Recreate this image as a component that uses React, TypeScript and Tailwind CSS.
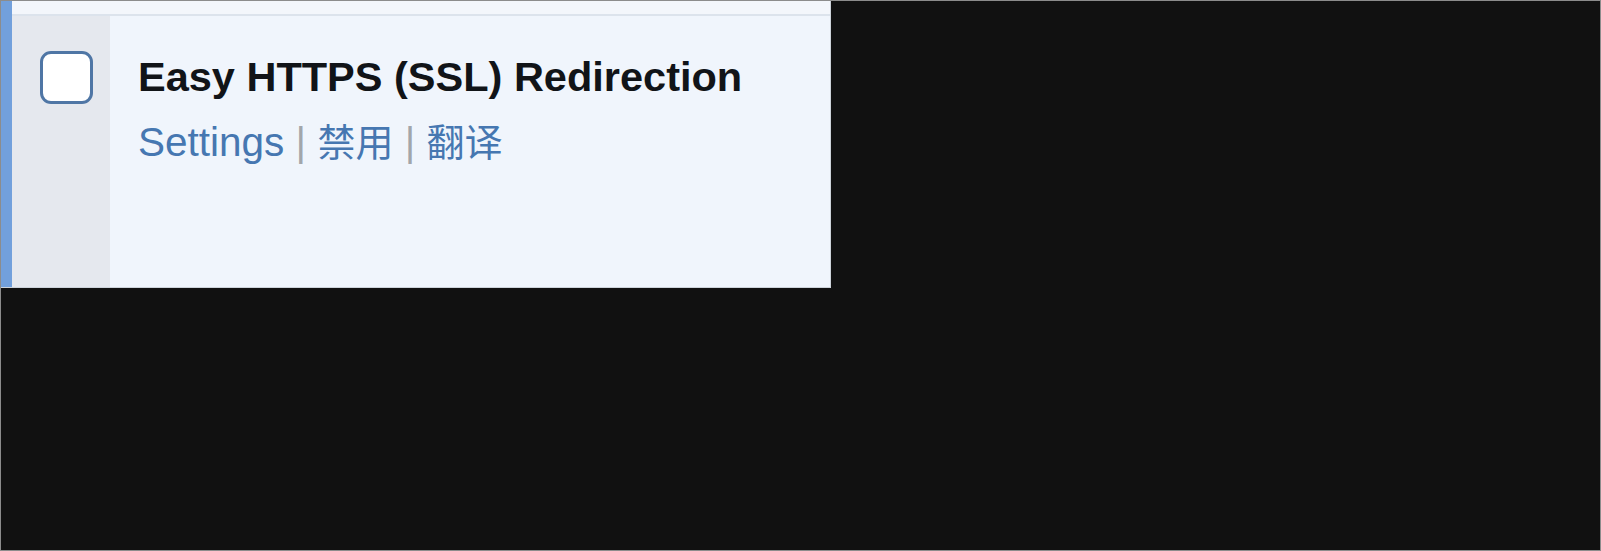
export default function App() {
    return (
        <div className="w-[1601px] h-[551px] bg-[#111111] border border-[#8c8c8c] font-['Liberation_Sans','Noto_Sans_CJK_SC',sans-serif]">
            <div className="w-[830px] flex bg-[#f0f5fc] border-r border-b border-[#cdd3da]">
                {/* active plugin marker */}
                <div className="w-[11px] bg-[#72a0dc]" />

                <div className="flex-1 flex flex-col">
                    <div className="h-[15px] bg-[#f3f6fb] border-b-2 border-[#dce3ec]" />

                    <div className="h-[271px] flex">
                        <div className="w-[98px] bg-[#e5e8ee] pl-[28px] pt-[35px]">
                            <div className="w-[53px] h-[53px] rounded-[11px] border-[3px] border-[#4f76a5] bg-white" />
                        </div>

                        <div className="flex-1 pl-[28px] pt-[37px]">
                            <div className="text-[41.5px] leading-[48px] font-bold text-[#111418]">
                                Easy HTTPS (SSL) Redirection
                            </div>
                            <div className="mt-[18px] text-[40.5px] leading-[46px] text-[#a2a6ab]">
                                <span className="text-[#4677b1]">Settings</span>
                                {" | "}
                                <span className="text-[#4677b1] text-[38px]">禁用</span>
                                {" | "}
                                <span className="text-[#4677b1] text-[38px]">翻译</span>
                            </div>
                        </div>
                    </div>
                </div>
            </div>
        </div>
    );
}
